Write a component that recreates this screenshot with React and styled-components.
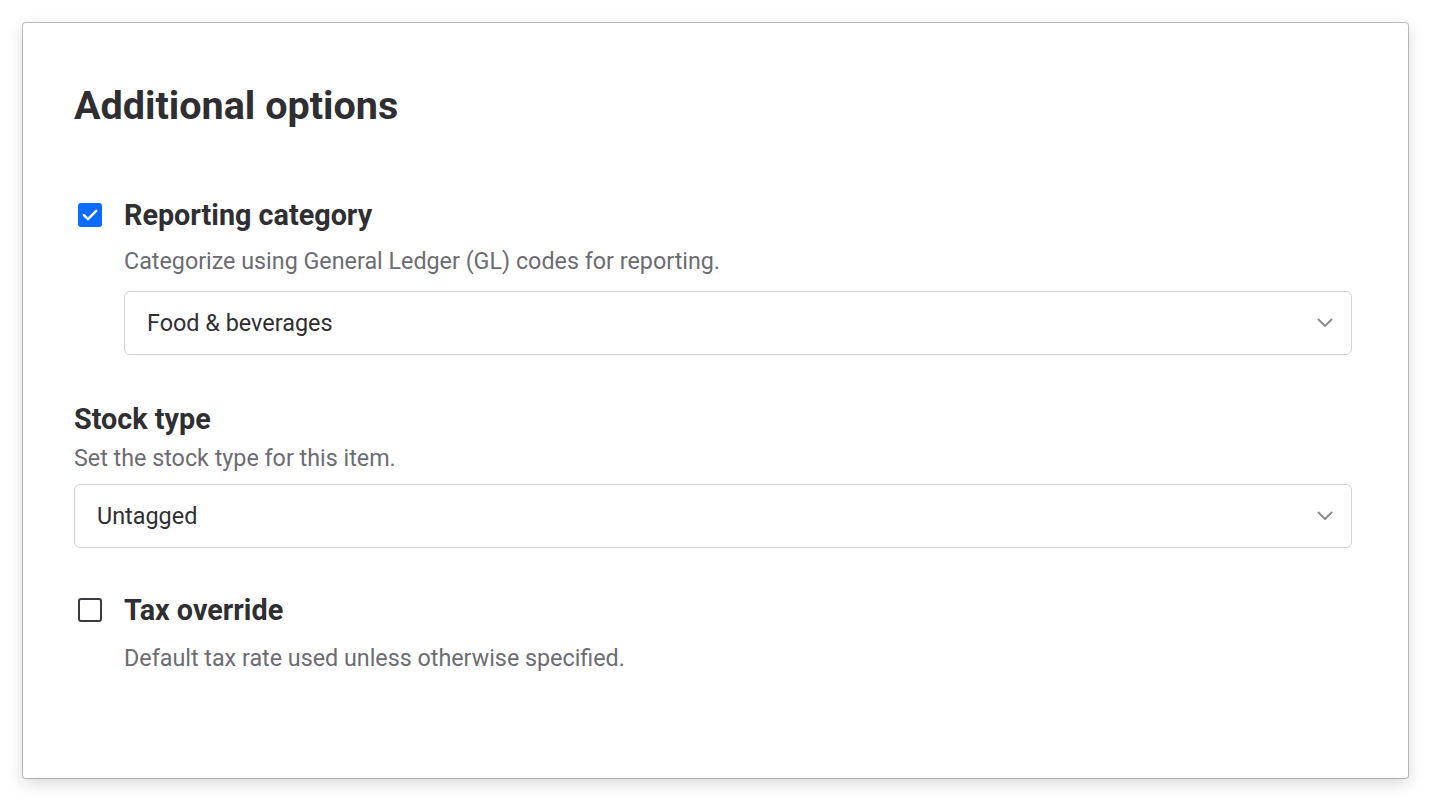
import React, { useState } from 'react';
import styled, { createGlobalStyle } from 'styled-components';

const GlobalStyle = createGlobalStyle`
  html, body {
    margin: 0;
    padding: 0;
    background: #ffffff;
  }
  body {
    font-family: Roboto, "Liberation Sans", Arial, sans-serif;
    color: #2f2f33;
  }
`;

const Page = styled.div`
  padding: 23px 24px 24px 23px;
`;

const Card = styled.section`
  box-sizing: border-box;
  height: 755px;
  padding: 61px 56px 0 51px;
  background: #fff;
  border-radius: 3px;
  box-shadow: 0 0 0 1px rgba(0, 0, 0, 0.24), 0 5px 16px rgba(0, 0, 0, 0.16);
`;

const Heading = styled.h1`
  margin: 0;
  font-size: 39.5px;
  line-height: 44px;
  font-weight: 700;
  color: #2f2f33;
`;

const CheckRow = styled.label`
  display: flex;
  align-items: center;
  gap: 22px;
  margin-top: ${p => p.$top}px;
  cursor: pointer;
`;

const Box = styled.span`
  box-sizing: border-box;
  width: 24px;
  height: 24px;
  margin-left: 4px;
  border-radius: 3px;
  display: flex;
  align-items: center;
  justify-content: center;
  flex-shrink: 0;
  background: ${p => (p.$on ? '#0b6cff' : '#fff')};
  border: 2px solid ${p => (p.$on ? '#0b6cff' : '#3a3a3f')};
`;

const FieldTitle = styled.div`
  font-size: 28.75px;
  line-height: 34px;
  font-weight: 700;
  color: #2f2f33;
  margin-top: ${p => p.$top || 0}px;
`;

const Hint = styled.p`
  margin: ${p => p.$top}px 0 0 ${p => (p.$indent ? 50 : 0)}px;
  font-size: 23.3px;
  line-height: 30px;
  color: #6c6c74;
`;

const Select = styled.div`
  box-sizing: border-box;
  height: 64px;
  margin: ${p => p.$top}px 0 0 ${p => (p.$indent ? 50 : 0)}px;
  padding: 0 18px 0 22px;
  display: flex;
  align-items: center;
  justify-content: space-between;
  border: 1px solid #d3d3d6;
  border-radius: 6px;
  font-size: 23.4px;
  color: #2f2f33;
  cursor: pointer;
`;

const Chevron = () => (
  <svg width="16" height="10" viewBox="0 0 16 10" fill="none">
    <path d="M1.5 1.5 8 8l6.5-6.5" stroke="#8c8c91" strokeWidth="2" strokeLinecap="round" strokeLinejoin="round" />
  </svg>
);

const Tick = () => (
  <svg width="16" height="12" viewBox="0 0 16 12" fill="none">
    <path d="M1.8 6.2 6 10.2 14.2 1.8" stroke="#fff" strokeWidth="2.4" strokeLinecap="round" strokeLinejoin="round" />
  </svg>
);

function Checkbox({ checked, onToggle, label, top }) {
  return (
    <CheckRow $top={top} onClick={onToggle}>
      <Box $on={checked}>{checked && <Tick />}</Box>
      <FieldTitle>{label}</FieldTitle>
    </CheckRow>
  );
}

export default function App() {
  const [reporting, setReporting] = useState(true);
  const [taxOverride, setTaxOverride] = useState(false);

  return (
    <Page>
      <GlobalStyle />
      <Card>
        <Heading>Additional options</Heading>

        <Checkbox
          top={70}
          checked={reporting}
          onToggle={() => setReporting(!reporting)}
          label="Reporting category"
        />
        <Hint $indent $top={14}>Categorize using General Ledger (GL) codes for reporting.</Hint>
        <Select $indent $top={15}>
          <span>Food &amp; beverages</span>
          <Chevron />
        </Select>

        <FieldTitle $top={47}>Stock type</FieldTitle>
        <Hint $top={7}>Set the stock type for this item.</Hint>
        <Select $top={11}>
          <span>Untagged</span>
          <Chevron />
        </Select>

        <Checkbox
          top={45}
          checked={taxOverride}
          onToggle={() => setTaxOverride(!taxOverride)}
          label="Tax override"
        />
        <Hint $indent $top={16}>Default tax rate used unless otherwise specified.</Hint>
      </Card>
    </Page>
  );
}
